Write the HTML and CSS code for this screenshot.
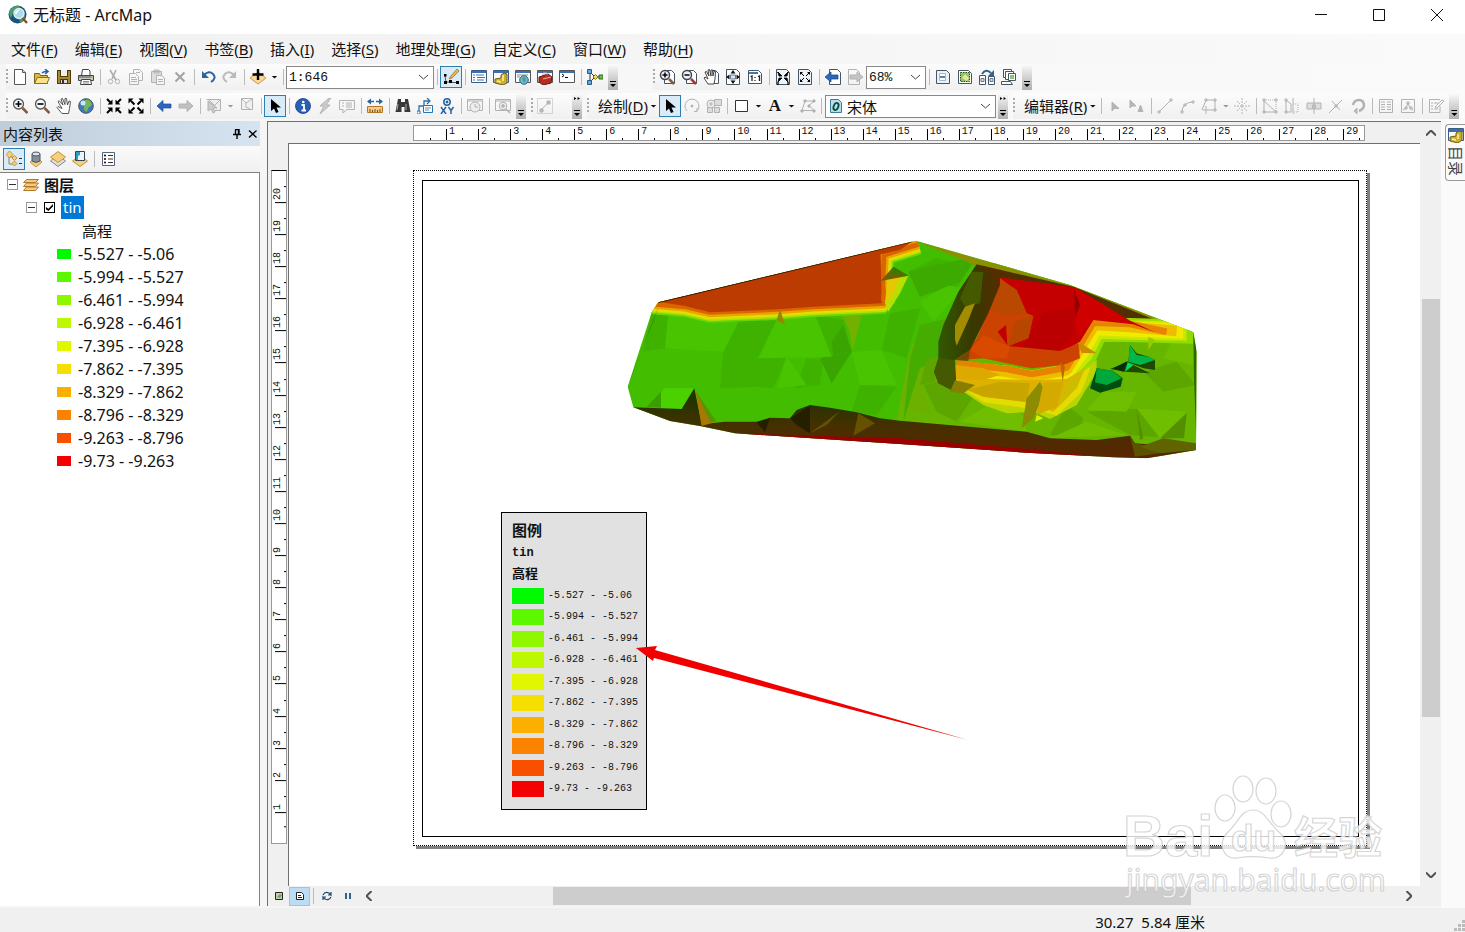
FILE: index.html
```html
<!DOCTYPE html>
<html lang="zh-CN">
<head>
<meta charset="utf-8">
<title>无标题 - ArcMap</title>
<link rel="stylesheet" href="styles.css">
</head>
<body>
<header class="titlebar">
  <svg class="logo" viewBox="0 0 20 20"><circle cx="9.500" cy="9.500" r="9" fill="#17557c"/><path d="M2 5q4-5 10-4l-2 5-5 2-2 5q-3-4-1-8M11 13l6-2q-1 5-5 7z" fill="#4d9b6b"/><circle cx="11" cy="8.500" r="5" fill="#a9dcec" stroke="#e0edf2" stroke-width="1.500"/><path d="M8 9q0-3 3-4" stroke="#fff" fill="none" stroke-width="1.500"/><path d="M14.500 13l4.500 5" stroke="#8b4f2b" stroke-width="2.500"/></svg>
  <h1>无标题 - ArcMap</h1>
  <div class="winctl">
    <button aria-label="最小化"><svg viewBox="0 0 12 12"><path d="M0 5.500h12"/></svg></button>
    <button aria-label="最大化"><svg viewBox="0 0 12 12"><path d="M.5.5h11v11H.5z"/></svg></button>
    <button aria-label="关闭"><svg viewBox="0 0 12 12"><path d="M0 0l12 12M12 0L0 12"/></svg></button>
  </div>
</header>
<nav class="menubar">
  <button>文件(<u>F</u>)</button><button>编辑(<u>E</u>)</button><button>视图(<u>V</u>)</button><button>书签(<u>B</u>)</button><button>插入(<u>I</u>)</button><button>选择(<u>S</u>)</button><button>地理处理(<u>G</u>)</button><button>自定义(<u>C</u>)</button><button>窗口(<u>W</u>)</button><button>帮助(<u>H</u>)</button>
</nav>

<div class="toolrow">
  <div class="toolbar">
    <i class="grip"></i>
    <button class="b" aria-label="新建"><svg viewBox="0 0 16 16"><path d="M2.500.5h8l3 3v12h-11z" fill="#fff" stroke="#555"/><path d="M10.500.5v3h3" fill="#cde" stroke="#555"/></svg></button>
    <button class="b" aria-label="打开"><svg viewBox="0 0 16 16"><path d="M.5 14.500v-10h5l1 2h7v8z" fill="#d9b64a" stroke="#7b6316"/><path d="M.5 14.500l3-6h12l-2.500 6z" fill="#fbe38a" stroke="#8a701d"/><path d="M8 4q2-2 5-1.500M11 0l3 2.500-3 2.500" fill="none" stroke="#1c5fa8" stroke-width="1.500"/></svg></button>
    <button class="b" aria-label="保存"><svg viewBox="0 0 16 16"><path d="M1 1h14v14H1z" fill="#4a3a10"/><path d="M2 2h2v6h8V2h2v12h-2v-4H4v4H2z" fill="#a8892c"/><path d="M5 1h6v6H5z" fill="#eee"/><path d="M5 11h6v3H5z" fill="#ddd"/><path d="M6 11h2v3H6z" fill="#333"/></svg></button>
    <button class="b" aria-label="打印"><svg viewBox="0 0 16 16"><path d="M3.500 6.500l1-6h6l1.500 1.500v4.500" fill="#fff" stroke="#444"/><path d="M.5 6.500h15v5H.5z" fill="#c8c8c4" stroke="#444"/><path d="M1 8h12" stroke="#555"/><circle cx="13.500" cy="8" r="1" fill="#e0a800"/><path d="M3.500 10.500h9l1 5h-11z" fill="#fff" stroke="#444"/><path d="M5 12.500h6M5 14h6" stroke="#888"/></svg></button>
    <i class="sep"></i>
    <button class="b off" aria-label="剪切"><svg viewBox="0 0 16 16"><path d="M4 1l6 10M10 1L6 10" stroke="#aaa" stroke-width="1.500"/><circle cx="4.500" cy="12.500" r="2.200"/><circle cx="11.500" cy="12.500" r="2.200"/></svg></button>
    <button class="b off" aria-label="复制"><svg viewBox="0 0 16 16"><path d="M5.500 4.500v-4h6l3 3v8h-4M1.500 4.500h6l3 3v8h-9zM3 8.500h5M3 10.500h6M3 12.500h6M8 3.500h4"/></svg></button>
    <button class="b off" aria-label="粘贴"><svg viewBox="0 0 16 16"><path d="M1.500 2.500h10v11h-10zM4 1h5v3H4z" fill="#ddd"/><path d="M6.500 6.500h5l3 2.500v6.500h-8zM8 10.500h5M8 12.500h5" fill="#f6f6f6"/></svg></button>
    <button class="b off" aria-label="删除"><svg viewBox="0 0 16 16"><path d="M3.500 3.500l9 9M12.500 3.500l-9 9" stroke="#a2a2a2" stroke-width="2"/></svg></button>
    <i class="sep"></i>
    <button class="b" aria-label="撤消"><svg viewBox="0 0 16 16"><path d="M4 6q5-5 9-1t-2 8" fill="none" stroke="#2d63a0" stroke-width="2"/><path d="M2 2v7h7z" fill="#2d63a0"/></svg></button>
    <button class="b off" aria-label="恢复"><svg viewBox="0 0 16 16"><path d="M12 6q-5-5-9-1t2 8" stroke="#bbb" stroke-width="2"/><path d="M14 2v7H7z" fill="#bbb" stroke="none"/></svg></button>
    <i class="sep"></i>
    <button class="b" aria-label="添加数据"><svg viewBox="0 0 16 16"><path d="M0 9l8-6 8 6-8 6z" fill="#fbd99a" stroke="#c79845"/><path d="M8 0v11M2.500 5.500h11" stroke="#000" stroke-width="2.400"/></svg></button><i class="drop"></i>
    <i class="sep"></i>
    <label class="combo scale"><select aria-label="比例"><option>1:646</option></select><svg viewBox="0 0 9 6"><path d="M0 1l4.500 4L9 1"/></svg></label>
    <i class="sep"></i>
    <button class="b on" aria-label="编辑器工具条"><svg viewBox="0 0 16 16"><path d="M2 7l1 6h4l3 .5h5" fill="none" stroke="#555"/><path d="M1 5h2.500v2.500H1zM1 12h3v3H1zM6 11h3v3H6zM13 12h3v3h-3z"/><path d="M7 8l7-8 2 2-7 7-2.500 1z" fill="#efb44d" stroke="#7a551c" stroke-width=".6"/></svg></button>
    <i class="sep"></i>
    <button class="b" aria-label="内容列表"><svg viewBox="0 0 16 16"><path d="M.5 1.500h15v12H.5z" fill="#fff" stroke="#3c5c85"/><path d="M1 2h14v2H1z" fill="#3b70b8"/><path d="M2 6h2M2 8.500h2M2 11h2M5 6h8M6 8.500h8M6 11h7" stroke="#3a79b8"/></svg></button>
    <button class="b" aria-label="目录"><svg viewBox="0 0 16 16"><path d="M.5 1.500h15v12H.5z" fill="#fff" stroke="#3c5c85"/><path d="M1 2h14v2H1z" fill="#3b70b8"/><path d="M8 6l3-2 3 1v9l-4 2-8-2v-4l6-1z" fill="#cbb02c" stroke="#705e12"/><path d="M10 6v6M4 12l4 1" stroke="#fff2a0" stroke-width="1.500"/></svg></button>
    <button class="b" aria-label="搜索"><svg viewBox="0 0 16 16"><path d="M.5 1.500h15v12H.5z" fill="#fff" stroke="#555"/><path d="M1 2h14v2H1z" fill="#3b70b8"/><path d="M2 6h11M2 8h3" stroke="#888"/><circle cx="9" cy="11" r="4.300" fill="#6eb6df" stroke="#2d648d"/><path d="M7 9l3-1 1 3-2 3z" fill="#53a45a"/></svg></button>
    <button class="b" aria-label="工具箱"><svg viewBox="0 0 16 16"><path d="M.5 1.500h15v12H.5z" fill="#fff" stroke="#555"/><path d="M1 2h14v2H1z" fill="#3b70b8"/><path d="M2 8l9-3 4 3-1 6-8 2-4-3z" fill="#b62b22" stroke="#651510"/><path d="M6 10l8-2M6 6V4h4v2" stroke="#eab0a0" fill="none"/></svg></button>
    <button class="b" aria-label="Python"><svg viewBox="0 0 16 16"><path d="M.5 1.500h15v12H.5z" fill="#fff" stroke="#555"/><path d="M1 2h14v2H1z" fill="#3b70b8"/><path d="M3 5l2 1.500L3 8M6 8.500h3" fill="none" stroke="#000"/></svg></button>
    <i class="sep"></i>
    <button class="b" aria-label="模型构建器"><svg viewBox="0 0 16 16"><path d="M3 3v10M3 3l5 5h5M3 13l5-5" stroke="#333" fill="none"/><path d="M.5.5h4v4h-4zM.5 11.500h4v4h-4z" fill="#5fa7de" stroke="#285d8d"/><path d="M6 8l2.500-2.500L11 8l-2.500 2.500z" fill="#f4d94a" stroke="#8b7515"/><path d="M12 6h4v4h-4z" fill="#64bd52" stroke="#2c6822"/></svg></button>
    <i class="more"></i>
  </div>
  <div class="toolbar layoutbar">
    <i class="grip"></i>
    <button class="b" aria-label="放大页面"><svg viewBox="0 0 16 16"><path d="M5.500 1.500h7l3 3v10h-10z" fill="#fff" stroke="#456"/><circle cx="6" cy="6" r="4.500" fill="#eef" stroke="#444" stroke-width="1.500"/><path d="M3.500 6h5M6 3.500v5" stroke="#000" stroke-width="1.500"/><path d="M10 10l5 5" stroke="#8b5a3c" stroke-width="2.500"/></svg></button>
    <button class="b" aria-label="缩小页面"><svg viewBox="0 0 16 16"><path d="M5.500 1.500h7l3 3v10h-10z" fill="#fff" stroke="#456"/><circle cx="6" cy="6" r="4.500" fill="#eef" stroke="#444" stroke-width="1.500"/><path d="M3.500 6h5" stroke="#000" stroke-width="1.500"/><path d="M10 10l5 5" stroke="#a33" stroke-width="2.500"/></svg></button>
    <button class="b" aria-label="平移页面"><svg viewBox="0 0 16 16"><path d="M8.500 1.500h4l3 3v10h-5" fill="#fff" stroke="#456"/><path d="M5 15L1 9l1-1 3 2-3-7 1.500-.5L6 7 5 1l1.500-.5L8 7V1h1.500l.5 6 1-5 1.500.5L12 10l-1 5z" fill="#fff" stroke="#333" stroke-width=".9"/></svg></button>
    <button class="b" aria-label="缩放整个页面"><svg viewBox="0 0 16 16"><path d="M1.500.5h10l3 3v12h-13z" fill="#fff" stroke="#456"/><path d="M8 1l2.500 3.500h-5zM8 15l2.500-3.500h-5zM1 8l3.500-2.500v5zM15 8l-3.500-2.500v5z" fill="#111"/><path d="M5.500 6h5v4h-5z" fill="#dde6ee" stroke="#678"/></svg></button>
    <button class="b" aria-label="100%"><svg viewBox="0 0 16 16"><path d="M1.500 1.500h10l3 3v10h-13z" fill="#fff" stroke="#456"/><path d="M2 4h9" stroke="#3d7ab2" stroke-width="2"/><path d="M3.500 7.500L5 7v5M11 7.500l1.500-.5v5M8 8v1M8 11v1" stroke="#222" fill="none" stroke-width="1.300"/></svg></button>
    <i class="sep"></i>
    <button class="b" aria-label="固定放大"><svg viewBox="0 0 16 16"><path d="M1.500.5h10l3 3v12h-13z" fill="#eef3f7" stroke="#456"/><path d="M3 3l4 4H4zV4zM13 3L9 7h3zV4zM3 13l4-4H4zv3zM13 13L9 9h3zv3z" fill="#000" stroke="#000" stroke-width=".8"/></svg></button>
    <button class="b" aria-label="固定缩小"><svg viewBox="0 0 16 16"><path d="M1.500.5h10l3 3v12h-13z" fill="#eef3f7" stroke="#456"/><path d="M7 7L4 4M9 7l3-3M7 9l-3 3M9 9l3 3" stroke="#000"/><path d="M3 3h3L3 6zM13 3h-3l3 3zM3 13h3l-3-3zM13 13h-3l3-3z"/></svg></button>
    <i class="sep"></i>
    <button class="b" aria-label="后退"><svg viewBox="0 0 16 16"><path d="M4.500.5h8l3 3v12h-11z" fill="#fff" stroke="#456"/><path d="M0 8l6-5v3h7v4H6v3z" fill="#2d68bd" stroke="#19427d" stroke-width=".7"/></svg></button>
    <button class="b off" aria-label="前进"><svg viewBox="0 0 16 16"><path d="M1.500.5h8l3 3v12h-11z"/><path d="M16 8l-6-5v3H3v4h7v3z" fill="#c4c4c4"/></svg></button>
    <label class="combo pct"><select aria-label="缩放比例"><option>68%</option></select><svg viewBox="0 0 9 6"><path d="M0 1l4.500 4L9 1"/></svg></label>
    <i class="sep"></i>
    <button class="b" aria-label="切换描绘模式"><svg viewBox="0 0 16 16"><path d="M1.500 1.500h10l3 3v10h-13z" fill="#eaf2f8" stroke="#456"/><path d="M4.500 4.500h6v7h-6z" fill="#fff" stroke="#9bc"/><path d="M5 8h5" stroke="#1c5b96" stroke-width="1.500"/></svg></button>
    <button class="b" aria-label="焦点数据框"><svg viewBox="0 0 16 16"><path d="M1.500 1.500h10l3 3v10h-13z" fill="#fff" stroke="#456"/><path d="M3.500 3.500h9v9h-9z" fill="#95c35c" stroke="#234c22" stroke-dasharray="1.500 1"/><path d="M5 9l3-4 4 4-2 3z" fill="#dfe8a0"/></svg></button>
    <button class="b" aria-label="更改布局"><svg viewBox="0 0 16 16"><path d="M3 5q4-6 9-1" fill="none" stroke="#2c6496" stroke-width="2"/><path d="M15 1v6H9z" fill="#2c6496"/><path d="M.5 6.500h6v9h-6zM9.500 7.500h6v8h-6z" fill="#fff" stroke="#456"/><path d="M2 9.500h3v3H2zM11 9.500h3v3h-3z" fill="#cde" stroke="#678"/></svg></button>
    <button class="b" aria-label="数据驱动页面"><svg viewBox="0 0 16 16"><path d="M2.500.5h8v8h-8z" fill="#fff" stroke="#456"/><path d="M4.500 2.500h8v8h-8z" fill="#fff" stroke="#456"/><path d="M7.500 4.500h7v7h-7z" fill="#fff" stroke="#456"/><path d="M9 6h4v4H9z" fill="#8fc07a"/><path d="M.5 12.500h9l2 3H.5z" fill="#fff" stroke="#456"/></svg></button>
    <i class="more"></i>
  </div>
</div>

<div class="toolrow">
  <div class="toolbar">
    <i class="grip"></i>
    <button class="b" aria-label="放大"><svg viewBox="0 0 16 16"><circle cx="6.500" cy="6" r="5" fill="#f3f8fa" stroke="#555" stroke-width="1.300"/><path d="M3.500 6h6M6.500 3v6" stroke="#000" stroke-width="1.600"/><path d="M10.500 10l5 5" stroke="#8b5a3c" stroke-width="2.600"/></svg></button>
    <button class="b" aria-label="缩小"><svg viewBox="0 0 16 16"><circle cx="6.500" cy="6" r="5" fill="#f3f8fa" stroke="#555" stroke-width="1.300"/><path d="M3.500 6h6" stroke="#000" stroke-width="1.600"/><path d="M10.500 10l5 5" stroke="#8b5a3c" stroke-width="2.600"/></svg></button>
    <button class="b" aria-label="平移"><svg viewBox="0 0 16 16"><path d="M6 15.500L1 9.500l1-1 4 2-4-7 1.200-.8L7 7 5 1l1.500-.5L9 6.500 9 .5h1.500l1 6.500 1.500-4 1.500.5-1 7-1 5z" fill="#fff" stroke="#444" stroke-width=".9"/></svg></button>
    <button class="b" aria-label="全图"><svg viewBox="0 0 16 16"><circle cx="8" cy="8" r="7.300" fill="#3f79ba" stroke="#456"/><path d="M7 2q6-1 7 5l-4 3-1 4-3-2V8L4 6z" fill="#75b55b"/><circle cx="5" cy="5" r="2.500" fill="#cbe7f5"/></svg></button>
    <i class="sep"></i>
    <button class="b" aria-label="固定比例放大"><svg viewBox="0 0 16 16" class="zoomarr"><path d="M1 1l4 4M15 1l-4 4M1 15l4-4M15 15l-4-4"/><path d="M6.500 6.500h-5l5-5zM9.500 6.500h5l-5-5zM6.500 9.500h-5l5 5zM9.500 9.500h5l-5 5z" class="head"/></svg></button>
    <button class="b" aria-label="固定比例缩小"><svg viewBox="0 0 16 16" class="zoomarr"><path d="M6.500 6.500L3 3M9.500 6.500L13 3M6.500 9.500L3 13M9.500 9.500L13 13"/><path d="M.5.5h5l-5 5zM15.500.5h-5l5 5zM.5 15.500h5l-5-5zM15.500 15.500h-5l5-5z" class="head"/></svg></button>
    <i class="sep"></i>
    <button class="b" aria-label="返回"><svg viewBox="0 0 16 16"><path d="M1 8l6-5.500V6h8v4H7v3.500z" fill="#2a66c0" stroke="#1b4c91" stroke-width=".7"/></svg></button>
    <button class="b off" aria-label="转至下一个"><svg viewBox="0 0 16 16"><path d="M15 8L9 2.500V6H1v4h8v3.500z" fill="#c0c0c0"/></svg></button>
    <i class="sep"></i>
    <button class="b off" aria-label="选择要素"><svg viewBox="0 0 16 16"><path d="M.5 1.500h14v11H9M14 2l-6 6M3 2l5 5" fill="#eee"/><path d="M2 3l9 7H7l2 4-2 1-2-4-3 2z" fill="#ccc"/></svg></button><i class="drop dim"></i>
    <button class="b off" aria-label="清除选择"><svg viewBox="0 0 16 16"><path d="M2.500.5h11v11h-11zM3 1l4 4 6-4M7 5v4l4 2" fill="#f0f0f0"/></svg></button>
    <i class="sep"></i>
    <button class="b on" aria-label="选择元素"><svg viewBox="0 0 16 16"><path d="M4 1v12l3-2.500L9 15l2.500-1-2-4.500H14z"/></svg></button>
    <i class="sep"></i>
    <button class="b" aria-label="识别"><svg viewBox="0 0 16 16"><circle cx="8" cy="8" r="7.500" fill="#285fb5" stroke="#173f82" stroke-width=".8"/><path d="M6.500 7H9v5M6.500 12.500h4.500" stroke="#fff" stroke-width="1.800" fill="none"/><circle cx="8.300" cy="4" r="1.300" fill="#fff"/></svg></button>
    <button class="b off" aria-label="超链接"><svg viewBox="0 0 16 16"><path d="M12 0L3 8h4l-4 8 10-9H9l5-7z" fill="#ccc"/></svg></button>
    <button class="b off" aria-label="HTML 弹出窗口"><svg viewBox="0 0 16 16"><path d="M.5 2.500h15v9H8l-4 3.500v-3.500H.5zM3 5h2M3 8h2M7 5h6M7 7h6M7 9h6"/></svg></button>
    <i class="sep"></i>
    <button class="b" aria-label="测量"><svg viewBox="0 0 16 16"><path d="M.5 8.500h15v6H.5z" fill="#f4cc85" stroke="#b27627"/><path d="M3 11v3M5.500 12v2M8 11v3M10.500 12v2M13 11v3" stroke="#754c16"/><path d="M1 3.500h6M9 3.500h6" stroke="#2166a6" stroke-width="1.500"/><path d="M0 3.500L4 .5v6zM16 3.500L12 .5v6z" fill="#2166a6"/></svg></button>
    <i class="sep"></i>
    <button class="b" aria-label="查找"><svg viewBox="0 0 16 16"><path d="M3 1h3v3h4V1h3l2.500 13H9.500V9h-3v5H.5z" fill="#383838"/><path d="M3 6L2 12M11 6v6" stroke="#aaa"/></svg></button>
    <button class="b" aria-label="查找路径"><svg viewBox="0 0 16 16"><path d="M2 15V8h5V3h5M10 0l3 3-3 3" fill="none" stroke="#2b73ad" stroke-width="1.300"/><path d="M6.500 7.500h9v7h-9zM0 13h3v3H0z" fill="#fff" stroke="#2b73ad"/><path d="M8 10h6M8 12h4" stroke="#5a92bd"/></svg></button>
    <button class="b" aria-label="转到 XY"><svg viewBox="0 0 16 16" fill="none" stroke="#2464a5" stroke-width="1.500"><circle cx="8" cy="4" r="3.200"/><circle cx="8" cy="4" r=".7"/><path d="M2 9l5 7M7 9l-5 7M9.500 9l2.500 3.500V16M14.500 9L12 12.500"/></svg></button>
    <i class="sep"></i>
    <button class="b off" aria-label="时间滑块"><svg viewBox="0 0 16 16"><path d="M.5 1.500h15v11H.5zM1 3h14"/><circle cx="8" cy="9" r="5" fill="#eee"/><path d="M8 6v3h3"/></svg></button>
    <i class="sep"></i>
    <button class="b off" aria-label="查看器窗口"><svg viewBox="0 0 16 16"><path d="M.5 1.500h15v11H.5zM1 3h14"/><circle cx="8" cy="8" r="3.800" fill="#eee"/><path d="M8 6v4M6 8h4M11 11l4 4" stroke-width="1.500"/></svg></button>
    <i class="more"></i>
  </div>
  <div class="toolbar">
    <i class="grip"></i>
    <button class="b off" aria-label="高级编辑"><svg viewBox="0 0 16 16"><path d="M.5.5h15v15H.5z" stroke-dasharray="1 1"/><path d="M4 12l8-8M3 11h3v3H3zM10 3h3v3h-3z" fill="#bbb"/></svg></button>
    <i class="gap"></i>
    <i class="more both"></i>
  </div>
  <div class="toolbar">
    <i class="grip"></i>
    <button class="txt">绘制(<u>D</u>)</button><i class="drop"></i>
    <button class="b on" aria-label="选择"><svg viewBox="0 0 16 16"><path d="M4 1v12l3-2.500L9 15l2.500-1-2-4.500H14z"/></svg></button>
    <button class="b off" aria-label="旋转"><svg viewBox="0 0 16 16"><path d="M3 13A7 7 0 1 1 13 13M13 10v3.500h-3"/><circle cx="8" cy="8" r="1" fill="#aaa"/></svg></button>
    <button class="b off" aria-label="缩放至元素"><svg viewBox="0 0 16 16"><path d="M8.500 1.500h7v6h-7zM8.500 9.500h5v5h-5zM1.500 9.500h5v5h-5z" fill="#ddd"/><circle cx="5" cy="6" r="4" fill="#eee"/><path d="M5 4v4M3 6h4"/></svg></button>
    <i class="sep"></i>
    <button class="b" aria-label="矩形"><svg viewBox="0 0 16 16"><path d="M1.500 2.500h12v11h-12z" fill="#fff" stroke="#333"/></svg></button><i class="drop"></i>
    <button class="b" aria-label="文本"><b class="serif">A</b></button><i class="drop"></i>
    <button class="b off" aria-label="编辑折点"><svg viewBox="0 0 16 16"><path d="M5 3h9l-5 4.500 5 5H2z"/><path d="M4 2h2v2H4zM13 2h2v2h-2zM13 12h2v2h-2zM1 12h2v2H1zM8 7h2v2H8z" fill="#aaa"/></svg></button>
    <i class="sep"></i>
    <label class="combo font"><svg class="otf" viewBox="0 0 12 14"><path d="M.5.5h8l3 3v10H.5z" fill="#b8dced" stroke="#3b7ca0"/><ellipse cx="6" cy="7.500" rx="2.300" ry="3.700" transform="rotate(22 6 7.500)" fill="none" stroke="#084f35" stroke-width="1.800"/></svg><select aria-label="字体"><option>宋体</option></select><svg viewBox="0 0 9 6"><path d="M0 1l4.500 4L9 1"/></svg></label>
    <i class="more both"></i>
  </div>
  <div class="toolbar editor">
    <i class="grip"></i>
    <button class="txt">编辑器(<u>R</u>)</button><i class="drop"></i>
    <i class="sep"></i>
    <button class="b off" aria-label="编辑工具"><svg viewBox="0 0 16 16"><path d="M5 4v9l2.500-2.500H12z" fill="#b5b5b5"/></svg></button>
    <button class="b off" aria-label="编辑注记"><svg viewBox="0 0 16 16"><path d="M1 2v8l2-2h4zM9 14l2.500-7L14 14M10 12h3" fill="#b5b5b5"/></svg></button>
    <i class="sep"></i>
    <button class="b off" aria-label="直线段"><svg viewBox="0 0 16 16"><path d="M2 14L14 2M1 13h2v2H1zM13 1h2v2h-2z"/></svg></button>
    <button class="b off" aria-label="弧段"><svg viewBox="0 0 16 16"><path d="M3 14q0-9 10-10M2 13h2v2H2zM13 3h2v2h-2zM5 6h2v2H5z"/></svg></button>
    <button class="b off" aria-label="追踪"><svg viewBox="0 0 16 16"><path d="M1 12L5 2h9v10H9M5 8v8M2 12h7M4 1h2v2H4zM13 1h2v2h-2zM13 11h2v2h-2z"/></svg></button><i class="drop dim"></i>
    <button class="b off" aria-label="点"><svg viewBox="0 0 16 16"><path d="M8 0v5M8 11v5M0 8h5M11 8h5M3 3l3 3M13 3l-3 3M3 13l3-3M13 13l-3-3" stroke-dasharray="2 1"/><path d="M7 7h2v2H7z"/></svg></button>
    <i class="sep"></i>
    <button class="b off" aria-label="编辑折点"><svg viewBox="0 0 16 16"><path d="M2 2v12h12L2 3"/><path d="M2 2h12v12" stroke-dasharray="1 1"/><path d="M1 1h2v2H1zM1 13h2v2H1zM13 13h2v2h-2zM13 1h2v2h-2z"/></svg></button>
    <button class="b off" aria-label="整形要素"><svg viewBox="0 0 16 16"><path d="M2 2v12h5V6L2 2M9 0v16M1 1h2v2H1zM1 13h2v2H1z"/><path d="M9 6h5v8H9" stroke-dasharray="1 1"/></svg></button>
    <button class="b off" aria-label="裁剪面"><svg viewBox="0 0 16 16"><path d="M1 5h14v6H1z" fill="#ddd"/><path d="M8 0v16M6.500 7h3v3h-3z"/></svg></button>
    <button class="b off" aria-label="分割"><svg viewBox="0 0 16 16"><path d="M1 15L14 2M4 3l8 9M7 7h2v2H7z"/></svg></button>
    <button class="b off" aria-label="旋转工具"><svg viewBox="0 0 16 16"><path d="M3 7q1-5 6-5t5 6q-1 4-5 5" stroke-width="2.500"/><path d="M7 10v6l-3-3z" fill="#bbb"/></svg></button>
    <i class="sep"></i>
    <button class="b off" aria-label="属性"><svg viewBox="0 0 16 16"><path d="M1.500 1.500h13v13h-13zM3 4h4M3 6.500h4M3 9h4M3 11.500h4M9 4h4M9 6.500h4M9 9h4M9 11.500h4"/></svg></button>
    <button class="b off" aria-label="草图属性"><svg viewBox="0 0 16 16"><path d="M1.500 1.500h13v13h-13zM3 12l3-2 2-5 2 5 3 2M7 4h2v2H7zM5 9h2v2H5zM10 9h2v2h-2z"/></svg></button>
    <i class="sep"></i>
    <button class="b off" aria-label="创建要素"><svg viewBox="0 0 16 16"><path d="M12 8v6.500H1.500v-13H12M3 5h2M3 8h2M3 11h2M6 5h4M6 11h4M7 9l7-7 2 1-7 7z"/></svg></button>
    <i class="more"></i>
  </div>
</div>

<main class="work">
  <aside class="toc">
    <div class="toc-head"><h2>内容列表</h2>
      <button aria-label="自动隐藏"><svg viewBox="0 0 10 10"><path d="M3 .5h4v5M3.500.5v5M6.500 1v5M1 5.500h8M5 6v4" /></svg></button>
      <button aria-label="关闭"><svg viewBox="0 0 10 10"><path d="M1 1.500l7.500 7M8.500 1.500L1 8.500"/></svg></button>
    </div>
    <div class="toc-tools">
      <button class="b on" aria-label="按绘制顺序列出"><svg viewBox="0 0 16 16"><path d="M3 5v8h4M4 6h4" stroke="#a77c31" fill="none"/><path d="M0 3.500L3.500 0 7 3.500 3.500 7zM6 7l2.500-2.500L11 7 8.500 9.500zM6 12.500L8.500 10l2.500 2.500L8.500 15z" fill="#f6ce83" stroke="#c7943d"/><path d="M13 7.500h3M13 12.500h3" stroke="#333"/></svg></button>
      <button class="b" aria-label="按源列出"><svg viewBox="0 0 16 16"><path d="M2 11l6-4 6 4-6 5z" fill="#f5cf7c" stroke="#c39436"/><path d="M4 3v7q4 3 8 0V3z" fill="#85909e" stroke="#4c5664"/><ellipse cx="8" cy="3" rx="4" ry="2" fill="#dce2ea" stroke="#4c5664"/></svg></button>
      <button class="b" aria-label="按可见性列出"><svg viewBox="0 0 16 16"><path d="M.5 10L8 4l7.500 6L8 15.500z" fill="#ddd" stroke="#888"/><path d="M.5 6L8 .5 15.500 6 8 11.500z" fill="#f5cf7c" stroke="#c39436"/></svg></button>
      <button class="b" aria-label="按选择列出"><svg viewBox="0 0 16 16"><path d="M.5 10L8 5l7.500 5L8 15.500z" fill="#f5cf7c" stroke="#c39436"/><path d="M3.500.5h9v9h-9z" fill="#e9f5fa" stroke="#345"/><path d="M4 1h4v3l-2 1v4H4z" fill="#2e9bc3"/></svg></button>
      <i class="sep"></i>
      <button class="b" aria-label="选项"><svg viewBox="0 0 16 16"><path d="M2.500 1.500h12v13h-12z" fill="#fff" stroke="#567"/><circle cx="5" cy="4.500" r="1"/><circle cx="5" cy="8" r="1"/><circle cx="5" cy="11.500" r="1"/><path d="M8 4.500h5M8 8h5M8 11.500h5" stroke="#333"/></svg></button>
    </div>
    <ul class="tree">
      <li class="root"><i class="box"></i><svg viewBox="0 0 16 14"><path d="M3.500 1.500h12l-3 3H.5zM3.500 5h12l-3 3.500H.5zM3.500 9h12l-3 3.500H.5z" fill="#f7c981" stroke="#b07a2b"/></svg><b>图层</b></li>
      <li class="layer"><i class="box"></i><label><input type="checkbox" checked><span>tin</span></label></li>
      <li class="field">高程</li>
      <li class="cls"><i class="c1"></i>-5.527 - -5.06</li>
      <li class="cls"><i class="c2"></i>-5.994 - -5.527</li>
      <li class="cls"><i class="c3"></i>-6.461 - -5.994</li>
      <li class="cls"><i class="c4"></i>-6.928 - -6.461</li>
      <li class="cls"><i class="c5"></i>-7.395 - -6.928</li>
      <li class="cls"><i class="c6"></i>-7.862 - -7.395</li>
      <li class="cls"><i class="c7"></i>-8.329 - -7.862</li>
      <li class="cls"><i class="c8"></i>-8.796 - -8.329</li>
      <li class="cls"><i class="c9"></i>-9.263 - -8.796</li>
      <li class="cls"><i class="c10"></i>-9.73 - -9.263</li>
    </ul>
  </aside>

  <section class="view">
    <div class="rules-top"><div class="hruler"><span></span><span>1</span><span>2</span><span>3</span><span>4</span><span>5</span><span>6</span><span>7</span><span>8</span><span>9</span><span>10</span><span>11</span><span>12</span><span>13</span><span>14</span><span>15</span><span>16</span><span>17</span><span>18</span><span>19</span><span>20</span><span>21</span><span>22</span><span>23</span><span>24</span><span>25</span><span>26</span><span>27</span><span>28</span><span class="end">29</span></div></div>
    <div class="rules-left"><div class="vruler"><span>20</span><span>19</span><span>18</span><span>17</span><span>16</span><span>15</span><span>14</span><span>13</span><span>12</span><span>11</span><span>10</span><span>9</span><span>8</span><span>7</span><span>6</span><span>5</span><span>4</span><span>3</span><span>2</span><span>1</span><span class="end"></span></div></div>
    <div class="canvas">
      <div class="sheet">
        <div class="neat"></div>
        <svg class="tin" viewBox="0 0 1800 750">
          <defs>
            <clipPath id="hull"><path d="M145 232L918 47 1380 180 1750 322 1760 380 1758 675 1610 700 1510 697 1250 683 870 657 375 625 270 603 180 588 70 547 53 485 125 262z"/></clipPath>
            <linearGradient id="skirt" x2="0" y2="1"><stop stop-color="#143600"/><stop offset=".45" stop-color="#473000"/><stop offset="1" stop-color="#642000"/></linearGradient>
            <linearGradient id="rim" x2="1" y2="0"><stop stop-color="#315c00"/><stop offset=".6" stop-color="#383800"/><stop offset="1" stop-color="#572d00"/></linearGradient>
          </defs>
          <g clip-path="url(#hull)">
            <path d="M0 0h1800v750H0z" fill="#43bd00"/>
            <path d="M905 360L870 530 860 590 1800 720V250L1400 170 1180 100 1080 140 1010 300z" fill="#66b600"/>
            <g fill="#3fb200"><path d="M125 262L175 268 165 370 100 380zM340 380L385 290 500 285 445 400 440 485 330 490zM615 270L700 285 725 380 665 475 630 400 665 395zM815 375L840 265 930 250 900 360 890 400zM445 400L530 395 490 490 440 485zM750 480L860 485 800 570 725 560zM590 400L640 405 630 480 555 490zM895 140L980 100 1080 125 1040 190 930 210z"/></g>
            <path d="M630 400L725 380 665 475zM665 350L700 300 725 380 670 390z" fill="#3aa500"/>
            <g fill="#48c400"><path d="M165 370L175 268 290 292 385 290 340 380zM500 285L615 270 665 395 445 400zM725 380L815 375 860 480 750 480zM530 395L590 480 500 490zM930 230L1010 180 1060 190 970 290z"/></g>
            <path d="M225 490L160 490 150 550 215 552zM253 490L225 490 150 500 150 550 215 552z" fill="#4bd000"/>
            <path d="M110 545L153 500V548z" fill="#3b9e00"/>
            <path d="M695 270H755L728 375 718 315z" fill="#73b000"/>
            <path d="M900 375L960 370 930 480 965 570 870 540z" fill="#6cb000"/>
            <path d="M930 300L1060 270 1010 390 930 430 880 590 900 400z" fill="#45ad00"/>
            <g fill="#5da600"><path d="M940 480L1000 465 1100 500 1040 590 980 560zM1430 560L1600 550 1680 640 1560 630zM950 400L985 400 975 470 930 480zM1370 540L1420 580 1400 640 1320 630zM1600 440L1700 410 1758 480 1660 500z"/></g>
            <path d="M1580 550L1600 640 1590 645zM1650 640L1730 565 1722 640z" fill="#548f00"/>
            <g fill="#70be00"><path d="M1050 590L1150 530 1240 570 1250 620zM1580 550L1730 560 1650 640zM1690 340L1750 350V420L1660 400zM1480 500L1580 500 1550 560 1430 555zM1430 590L1550 630 1320 640z"/></g>
            <path d="M895 140L1070 100 1090 110 1050 170 930 215z" fill="#3caa00"/>

            <g fill="none" stroke-linejoin="bevel">
              <path d="M120 236L225 245 300 262 505 253 610 245 825 235 818 180 822 90 925 58" stroke="#67d600" stroke-width="62"/>
              <path d="M120 236L225 245 300 262 505 253 610 245 825 235 818 180 822 90 925 58" stroke="#b7e000" stroke-width="52"/>
              <path d="M120 236L225 245 300 262 505 253 610 245 825 235 818 180 822 90 925 58" stroke="#e6dc00" stroke-width="42"/>
              <path d="M120 236L225 245 300 262 505 253 610 245 825 235 818 180 822 90 925 58" stroke="#e4a600" stroke-width="29"/>
              <path d="M120 236L225 245 300 262 505 253 610 245 825 235 818 180 822 90 925 58" stroke="#dd6500" stroke-width="15"/>
            </g>
            <path d="M825 235L845 160 895 152 870 205 835 260z" fill="#b7e000"/><path d="M825 235L832 160 870 158 845 215z" fill="#e6c800"/>
            <path d="M145 230L905 50 870 75 812 88 815 235 610 245 505 253 300 262 225 243z" fill="#bb3b00"/>
            <path d="M145 232L905 50" stroke="#241600" stroke-width="4"/>
            <path d="M812 168L850 125 895 152z" fill="#6c6200"/><path d="M850 125L895 152 840 143z" fill="#387b00"/>
            <path d="M510 252L525 300 500 285z" fill="#9b8500"/>
            <path d="M145 245L53 485 75 425 130 290z" fill="#318600"/>

            <g transform="translate(870)">
              <path d="M45 47L520 185 880 322 840 315 690 295 525 192 300 160 190 105z" fill="#8b8f00"/>
              <path d="M230 118L520 185 840 315 760 312 690 290 525 192 300 160z" fill="#522f00"/>
              <g fill="none" stroke-linejoin="bevel">
                <path d="M500 440L555 390 590 315 690 315 880 320" stroke="#8fdd00" stroke-width="72"/>
                <path d="M500 440L550 385 588 312 690 315 860 318" stroke="#c8e600" stroke-width="58"/>
                <path d="M170 430L320 445 395 460 500 440 545 380 585 308 690 312 850 318" stroke="#eeea00" stroke-width="46"/>
                <path d="M170 425L320 440 395 455 500 435 540 370 583 300 690 306 830 318" stroke="#eebd00" stroke-width="32"/>
                <path d="M170 415L320 432 395 447 500 428 538 362 580 293 690 297 800 320" stroke="#e78300" stroke-width="20"/>
              </g>
              <path d="M165 460L270 470 400 472 500 465 590 405 590 440 530 540 450 582 400 560 320 565 250 540 190 500z" fill="#b9d400"/>
              <path d="M168 462L270 468 400 472 500 468 572 425 545 500 470 572 400 552 250 532 195 495z" fill="#e2dc00"/>
              <path d="M168 458L270 462 400 466 500 462 555 430 510 510 460 560 400 535 250 515 200 490z" fill="#dcb100"/>
              <path d="M200 495L300 470 390 475 380 530 250 515z" fill="#c9a500"/><path d="M165 420L250 430 300 450 250 465 165 462z" fill="#dda900"/>
              <path d="M500 470L555 430 530 490 470 545z" fill="#cfbb00"/>
              <path d="M380 520L420 470 435 500 400 580 365 610 375 550z" fill="#8d8b00"/><path d="M430 475L490 470 470 545 410 570z" fill="#d4aa00"/>
              <path d="M410 570L430 580 405 590z" fill="#e5ee00"/>
              <path d="M300 157L525 187 690 287 765 322 700 298 580 285 540 350 480 385 325 390 230 250z" fill="#c50000"/>
              <path d="M522 187L690 287 580 285 535 335 525 280z" fill="#cf0000"/><path d="M522 190L540 240 525 280z" fill="#970000"/><path d="M370 365L430 260 520 250 520 330 470 378z" fill="#ba0000"/>
              <path d="M300 160L350 195 380 265 400 272 385 340 325 363 380 368 480 378 535 355 540 400 490 420 395 430 320 415 250 400 180 405 230 340 270 250z" fill="#cc4200"/>
              <path d="M300 165L350 195 380 265 310 270 270 250z" fill="#b94800"/><path d="M345 290L400 272 385 340 325 363z" fill="#b74700"/><path d="M293 320L318 300 322 360z" fill="#c00000"/>
              <path d="M210 375L250 330 330 365 320 400 250 400z" fill="#d94a00"/><path d="M480 410L495 425 488 470z" fill="#c26500"/><path d="M535 350L590 385 545 384z" fill="#c98a00"/>
              <path d="M215 140L230 118 300 155 300 180 265 265 210 375 165 405 168 465 165 500 115 475 102 440 115 400 115 350 130 300 175 200z" fill="url(#rim)"/>
              <path d="M180 220L215 140 250 140 240 235 195 245zM115 400L165 405 165 500 115 475 102 440z" fill="#455900"/>
              <path d="M165 345L165 300 195 245 225 235 205 285 170 362z" fill="#a38c00"/>
              <path d="M165 465L225 480 190 505 150 500z" fill="#887e00"/><path d="M165 405L210 375 205 408z" fill="#774700"/>
              <path d="M590 430L640 438 668 460 662 485 600 503 570 490z" fill="#004d12"/><path d="M590 430L640 438 665 460 620 480 585 472z" fill="#00a83c"/>
              <path d="M680 410L730 430 765 435V405L745 395 710 385 690 360 685 410 630 432 675 440 750 445z" fill="#1d4a00"/>
              <path d="M690 360L710 390 745 395 765 405 720 420 685 410z" fill="#00b649"/><path d="M675 440L683 412 700 420z" fill="#00e060"/><path d="M640 430L683 408 670 440z" fill="#082d0b"/>
              <path d="M745 335L765 345 745 375z" fill="#99ca00"/>
            </g>
            <path d="M70 547L215 552 253 490 275 598 345 590 440 590 480 578 540 580 560 555 600 540 660 548 740 562 810 580 870 587 1250 620 1320 640 1460 645 1560 632 1575 655 1758 670V750H70z" fill="url(#skirt)"/>
            <path d="M257 498L318 590 275 603z" fill="#aa7700"/><path d="M257 498L300 590 318 588z" fill="#579500"/>
            <path d="M440 592L480 580 465 622zM540 580L600 542V625L560 600z" fill="#251f00"/><path d="M600 625L690 558 650 600zM730 632L745 565 795 595z" fill="#665100"/>
            <path d="M1560 632L1575 695 1690 678 1575 655z" fill="#5c5200"/><path d="M1590 665L1660 640 1758 655V675L1650 685z" fill="#5f6300"/>
            <path d="M375 625L870 640 1250 672 1450 693 1250 690 870 665z" fill="#9b0000"/>
            <path d="M1750 322L1760 380V675L1752 460z" fill="#2d6900"/>
          </g>
        </svg>
        <div class="legend">
          <h3>图例</h3><h4>tin</h4><h4 class="han">高程</h4>
          <ul>
            <li><i class="c1"></i>-5.527 - -5.06</li><li><i class="c2"></i>-5.994 - -5.527</li><li><i class="c3"></i>-6.461 - -5.994</li><li><i class="c4"></i>-6.928 - -6.461</li><li><i class="c5"></i>-7.395 - -6.928</li><li><i class="c6"></i>-7.862 - -7.395</li><li><i class="c7"></i>-8.329 - -7.862</li><li><i class="c8"></i>-8.796 - -8.329</li><li><i class="c9"></i>-9.263 - -8.796</li><li><i class="c10"></i>-9.73 - -9.263</li>
          </ul>
        </div>
        <svg class="arrow" viewBox="0 0 334 100"><path d="M0 6L21 4 19 8 332 98 18 16 17 19z" fill="#f00000"/></svg>
      </div>
    </div>
    <div class="vscroll"><svg viewBox="0 0 10 6"><path d="M0 5.500l5-5 5 5"/></svg><div class="track"><div class="thumb"></div></div><svg viewBox="0 0 10 6"><path d="M0 .5l5 5 5-5"/></svg></div>
    <div class="bottom">
      <button class="mini" aria-label="数据视图"><svg viewBox="0 0 10 10"><path d="M1.500 1.500h7v7h-7z" fill="#c4d39b" stroke="#222"/><path d="M3 6l3-3 2 1-2 3z" fill="#6d9c86"/></svg></button>
      <button class="mini sel" aria-label="布局视图"><svg viewBox="0 0 10 10"><path d="M1.500 1.500h5l2 2v5h-7z" fill="#fff" stroke="#222"/><path d="M3 4.500h3M3 6.500h4" stroke="#222"/></svg></button>
      <i class="sep"></i>
      <button class="mini" aria-label="刷新"><svg viewBox="0 0 10 10"><path d="M1 4q2-4 6-2l2 2V1M9 4H6M9 6q-2 4-6 2L1 6v3M1 6h3" fill="none" stroke="#234a74" stroke-width="1.200"/></svg></button>
      <button class="mini" aria-label="暂停"><svg viewBox="0 0 10 10"><path d="M3 2v6M7 2v6" stroke="#2e5e93" stroke-width="2"/></svg></button>
      <svg class="hv" viewBox="0 0 6 10"><path d="M5.500 0l-5 5 5 5"/></svg>
      <div class="track"><div class="thumb"></div></div>
      <svg class="hv" viewBox="0 0 6 10"><path d="M.5 0l5 5-5 5"/></svg>
    </div>
    <svg class="mark" viewBox="0 0 275 130" role="img" aria-label="Baidu 经验">
      <g><ellipse cx="104" cy="34" rx="10" ry="13"/><ellipse cx="122" cy="15" rx="10" ry="13"/><ellipse cx="145" cy="17" rx="10" ry="13"/><ellipse cx="160" cy="40" rx="10" ry="13"/><path d="M132 36c-12 0-15 13-24 21-13 11-6 29 8 27 12-2 20-2 32 0 16 2 22-16 10-26-10-8-14-22-26-22z"/></g>
      <text x="2" y="82" class="m1">Bai</text><text x="110" y="77" class="m2">du</text><text x="173" y="80" class="m3">经验</text><text x="5" y="117" class="m4">jingyan.baidu.com</text>
    </svg>
  </section>

  <aside class="dock"><button><svg viewBox="0 0 16 16"><path d="M.5 1.500h15v12H.5z" fill="#fff" stroke="#3c5c85"/><path d="M1 2h14v3H1z" fill="#3b70b8"/><path d="M8 6l3-2 3 1v8l-4 3-8-2v-4l6-1z" fill="#cbb02c" stroke="#705e12"/><path d="M10 7v5M4 12l4 1" stroke="#fff2a0" stroke-width="1.500"/></svg><span>目录</span></button></aside>
</main>
<footer class="status"><span>30.27&nbsp; 5.84 厘米</span><svg viewBox="0 0 12 12"><path d="M9 1h3v3H9zM5 5h3v3H5zM9 5h3v3H9zM1 9h3v3H1zM5 9h3v3H5zM9 9h3v3H9z"/></svg></footer>
</body>
</html>
```

FILE: styles.css
```css
* { box-sizing: border-box; }
body {
  margin: 0;
  height: 100vh;
  display: flex;
  flex-direction: column;
  overflow: hidden;
  background: #f5f5f5;
  color: #111;
  font: 15px/20px "Noto Sans", "Noto Sans CJK SC", sans-serif;
}
h1, h2, h3, h4, ul { margin: 0; padding: 0; font-weight: normal; list-style: none; }
button { border: 0; padding: 0; margin: 0; background: none; color: inherit; font: inherit; }
i { font-style: normal; flex: none; }
svg { display: block; }
u { text-underline-offset: 2px; }

.titlebar { flex: none; height: 34px; display: flex; align-items: center; padding: 0 21px 4px 8px; background: #fff; }
.logo { width: 20px; height: 20px; }
.titlebar h1 { flex: 1; margin-left: 5px; font-size: 16px; }
.winctl { display: flex; gap: 46px; padding-right: 1px; }
.winctl svg { width: 12px; height: 12px; fill: none; stroke: #111; }

.menubar { flex: none; display: flex; gap: 17px; height: 30px; padding: 0 11px; align-items: center; background: linear-gradient(90deg, #f1f1f1, #fafafa); }

.toolrow { flex: none; display: flex; height: 28px; padding: 0 0 2px 6px; overflow: hidden; background: linear-gradient(90deg, #f5f5f5, #fafafa); }
.toolrow + .toolrow { height: 29px; padding-top: 1px; }
.toolbar { flex: none; display: flex; align-items: center; height: 26px; margin-right: 5px; background: linear-gradient(#fcfcfc, #f0f0f0); }
.layoutbar { margin-left: 30px; }
.editor { margin-right: 0; }
.grip { width: 3px; height: 16px; background: repeating-linear-gradient(#aaa 0 2px, transparent 2px 4px) left / 2px 100% no-repeat; }
.sep { width: 6px; height: 16px; background: linear-gradient(#bbb, #bbb) center / 1px 100% no-repeat; }
.gap { width: 14px; }
.b { flex: none; width: 22px; height: 22px; display: flex; align-items: center; justify-content: center; }
.b svg { width: 16px; height: 16px; }
.b.on { background: #d9ebf7; border: 1px solid #2c7fae; }
.off svg { fill: none; stroke: #b2b2b2; }
.zoomarr { fill: none; stroke: #000; stroke-width: 2; }
.zoomarr .head { fill: #000; stroke: none; }
.drop { width: 11px; height: 3px; background: #111; clip-path: polygon(20% 0, 80% 0, 50% 100%); }
.drop.dim { background: #999; }
.more { width: 10px; height: 26px; margin-left: 2px; background: linear-gradient(transparent, #b0b0b0); position: relative; }
.more::after { content: ""; position: absolute; left: 2px; bottom: 3px; width: 6px; height: 6px; background: #000; clip-path: polygon(0 0, 100% 0, 100% 17%, 0 17%, 0 50%, 100% 50%, 50% 100%, 0 50%); }
.both::before { content: ""; position: absolute; left: 2px; top: 4px; width: 6px; height: 3px; background: #000; clip-path: polygon(0 0, 40% 50%, 0 100%, 0 0, 60% 0, 100% 50%, 60% 100%, 60% 0); }
.txt { padding-left: 8px; white-space: nowrap; }
.serif { font: bold 17px/20px "Liberation Serif", serif; }
.combo { flex: none; display: flex; align-items: center; height: 23px; padding: 0 5px 0 2px; background: #fff; border: 1px solid #888; }
.combo select { flex: 1; min-width: 0; height: 21px; appearance: none; border: 0; padding: 0; background: none; color: #111; font: 13px "Liberation Mono", monospace; }
.combo svg { width: 9px; height: 6px; fill: none; stroke: #444; }
.scale { width: 148px; }
.pct { width: 60px; }
.font { width: 171px; }
.font select { padding-left: 5px; font: 15px "Noto Sans CJK SC", sans-serif; }
.combo .otf { width: 12px; height: 14px; margin-left: 2px; }

.work { flex: 1; min-height: 0; display: flex; }
.toc { flex: none; width: 260px; margin-right: 7px; display: flex; flex-direction: column; }
.toc-head { display: flex; align-items: center; gap: 6px; height: 25px; padding: 0 2px 0 3px; background: linear-gradient(90deg, #bfcddb, #d6e4f1); }
.toc-head h2 { flex: 1; font-size: 15px; }
.toc-head svg { width: 10px; height: 10px; fill: none; stroke: #000; stroke-width: 1.4; }
.toc-tools { display: flex; align-items: center; height: 26px; padding-left: 3px; background: linear-gradient(#fafafa, #f0f0f0); }
.tree { flex: 1; background: #fff; border: solid #828282; border-width: 1px 1px 0 0; margin-bottom: 2px; }
.tree li { display: flex; align-items: center; height: 23px; }
.root { padding-left: 7px; }
.root svg { width: 16px; height: 14px; margin: 0 5px; }
.box { width: 11px; height: 11px; border: 1px solid #999; background: linear-gradient(#333, #333) center / 7px 1px no-repeat; }
.layer { padding-left: 26px; }
.layer label { display: flex; align-items: center; }
.layer input { display: flex; appearance: none; width: 11px; height: 11px; margin: 0 6px 0 7px; border: 1px solid #000; background: #fff; }
.layer input:checked::before { content: ""; flex: 1; background: #000; clip-path: polygon(10% 45%, 38% 65%, 88% 12%, 88% 38%, 38% 90%, 10% 70%); }
.layer span { padding: 0 2px; background: #0078d7; color: #fff; line-height: 23px; }
.field { padding-left: 82px; }
.tree .cls { padding-left: 57px; gap: 7px; font-size: 16px; }
.cls i { width: 14px; height: 10px; }
.c1 { background: #00fa00; }
.c2 { background: #5cf800; }
.c3 { background: #8ff800; }
.c4 { background: #bdf800; }
.c5 { background: #e0f700; }
.c6 { background: #f5df00; }
.c7 { background: #fbb000; }
.c8 { background: #fb8300; }
.c9 { background: #f95000; }
.c10 { background: #f50000; }

.view { flex: 1; min-width: 0; position: relative; display: grid; grid-template: 21px minmax(0, 1fr) 20px / 20px minmax(0, 1fr) 21px; margin-bottom: 2px; background: #f0f0f0; border: solid #707070; border-width: 1px 0 0 1px; }
.rules-top { grid-column: 1 / 3; padding: 3px 0 0 145px; }
.hruler { display: flex; width: 952px; height: 16px; border: 1px solid #999; background: #fff; }
.hruler span { flex: 10 0 0; min-width: 0; position: relative; padding-left: 3px; font: 10px/12px "Liberation Mono", monospace; }
.hruler .end { flex-grow: 6; }
.hruler span + span::before { content: ""; position: absolute; left: 0; bottom: 0; height: 11px; border-left: 1px solid #000; }
.hruler span::after { content: ""; position: absolute; left: 16px; bottom: 0; height: 2px; border-left: 1px solid #000; }
.rules-left { grid-column: 1; grid-row: 2; padding: 27px 0 0 3px; }
.vruler { display: flex; flex-direction: column; width: 16px; height: 674px; border: 1px solid #999; border-top-color: #000; background: #fff; }
.vruler span { flex: 32 0 0; min-height: 0; position: relative; writing-mode: vertical-rl; transform: rotate(180deg); padding-top: 3px; font: 10px/12px "Liberation Mono", monospace; text-align: left; }
.vruler .end { flex-grow: 30; }
.vruler span:not(:last-child)::before { content: ""; position: absolute; left: 0; top: 0; width: 11px; border-top: 1px solid #000; }
.vruler span::after { content: ""; position: absolute; left: 0; top: 16px; width: 2px; border-top: 1px solid #000; }
.canvas { grid-column: 2; grid-row: 2; position: relative; overflow: hidden; background: #fff; border: solid #707070; border-width: 1px 0 0 1px; }
.sheet { position: absolute; left: 124px; top: 26px; width: 954px; height: 676px; border: 1px dotted #000; background: #fff; box-shadow: 3px 3px 0 #808080; }
.neat { position: absolute; inset: 9px 7px 8px 8px; border: 1px solid #000; }
.tin { position: absolute; left: 196px; top: 54px; width: 600px; height: 250px; }
.legend { position: absolute; left: 87px; top: 341px; width: 146px; height: 298px; display: flex; flex-direction: column; padding: 6px 0 12px 10px; background: #e1e1e1; border: 1px solid #000; }
.legend h3 { font: bold 15px/22px "Noto Sans CJK SC", sans-serif; }
.legend h4 { font: bold 12px/24px "Liberation Mono", monospace; }
.legend .han { font: bold 13px/16px "Noto Sans CJK SC", sans-serif; }
.legend ul { flex: 1; display: flex; flex-direction: column; justify-content: space-between; padding-top: 7px; }
.legend li { display: flex; align-items: center; gap: 4px; white-space: nowrap; font: 10px/16px "Liberation Mono", monospace; }
.legend i { width: 32px; height: 16px; }
.arrow { position: absolute; left: 222px; top: 471px; width: 334px; height: 100px; }

.vscroll { grid-column: 3; grid-row: 1 / 3; display: flex; flex-direction: column; align-items: center; padding: 8px 0; }
.vscroll svg { width: 10px; height: 6px; }
.vscroll svg, .hv { flex: none; fill: none; stroke: #505050; stroke-width: 2; }
.vscroll .track { flex: 1; width: 18px; padding: 163px 0 155px; }
.thumb { height: 100%; background: #cdcdcd; }
.bottom { grid-column: 1 / 3; display: flex; align-items: center; }
.mini { width: 21px; height: 19px; display: flex; align-items: center; justify-content: center; }
.mini svg { width: 10px; height: 10px; }
.mini.sel { background: #bcdcf4; border: 1px solid #90c8ef; }
.hv { width: 6px; height: 10px; margin: 0 8px; }
.bottom .track { flex: 1; height: 18px; padding: 0 18% 0 15%; }
.mark { position: absolute; right: 45px; bottom: 2px; width: 275px; height: 130px; fill: #fff; fill-opacity: .8; stroke: #c4c4c4; stroke-opacity: .7; stroke-width: 1.2; }
.m1 { font: bold 58px "Liberation Sans", sans-serif; }
.m2 { font: bold 37px "Liberation Sans", sans-serif; }
.m3 { font: bold 44px "Noto Sans CJK SC", sans-serif; }
.m4 { font: 30px "Noto Sans", sans-serif; }

.dock { flex: none; width: 24px; padding: 3px 0 0 4px; background: #fafafa; }
.dock button { width: 20px; padding: 2px 0 4px 2px; border: 1px solid #999; border-right: 0; border-radius: 4px 0 0 4px; }
.dock svg { width: 16px; height: 16px; }
.dock span { display: block; margin-top: 3px; writing-mode: vertical-rl; line-height: 16px; color: #444; text-orientation: sideways; }
.status { flex: none; display: flex; align-items: center; justify-content: flex-end; height: 24px; padding-top: 4px; background: #f0f0f0; }
.status svg { width: 12px; height: 12px; margin: 6px 0 0 248px; fill: #bbb; }
```
